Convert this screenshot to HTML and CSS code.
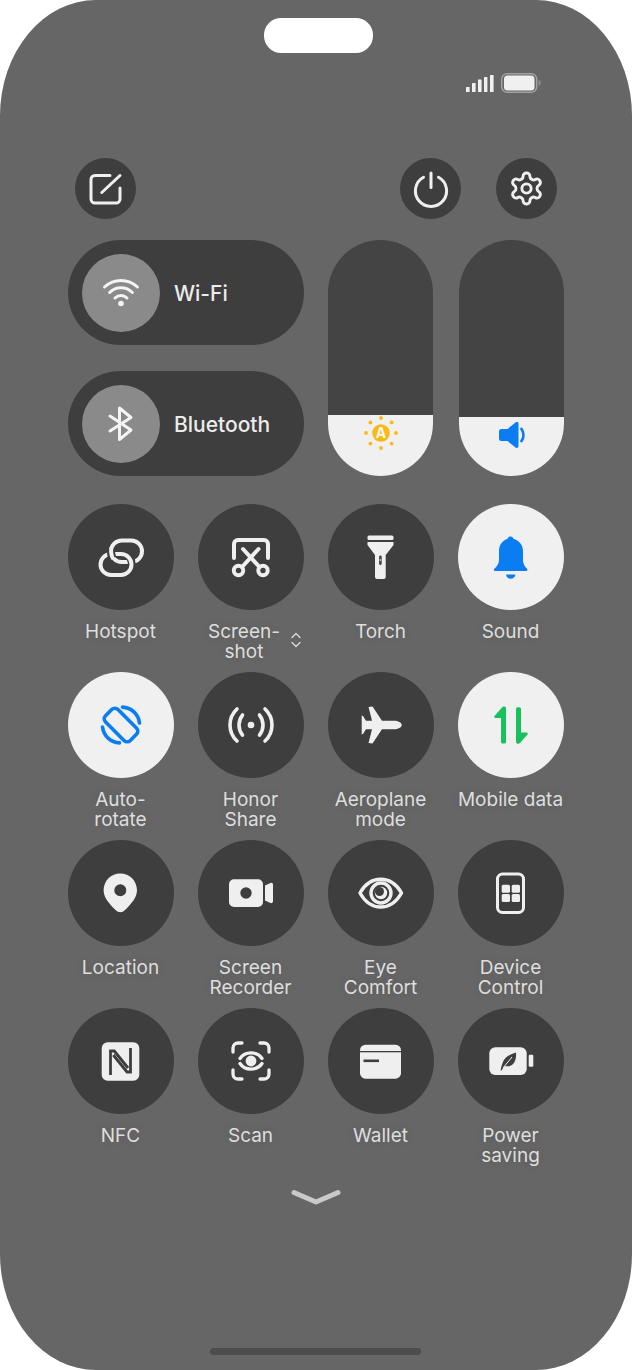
FILE: index.html
```html
<!DOCTYPE html>
<html lang="en">
<head>
    <meta charset="UTF-8">
    <meta name="viewport" content="width=device-width, initial-scale=1.0">
    <title>Control centre</title>
    <link rel="stylesheet" href="styles.css">
</head>
<body>
    <div class="phone">
        <div class="notch"></div>

        <div class="status">
            <svg class="signal" width="28" height="17" viewBox="0 0 28 17">
                <rect x="0" y="12" width="3.6" height="5" rx="0.6"/>
                <rect x="6" y="8" width="3.6" height="9" rx="0.6"/>
                <rect x="12" y="4.5" width="3.6" height="12.5" rx="0.6"/>
                <rect x="18" y="2" width="3.4" height="15" rx="0.6"/>
                <rect x="24" y="0" width="3.6" height="17" rx="0.6"/>
            </svg>
            <svg class="battery" width="40" height="20" viewBox="0 0 40 20">
                <rect x="0.7" y="0.7" width="35" height="18.6" rx="5.5" fill="none" stroke="#a2a2a2" stroke-width="1.4"/>
                <rect x="3" y="2.5" width="30.5" height="15" rx="3.5" fill="#f0f0f0"/>
                <path d="M37.6 7c1.4.4 2 1.5 2 3s-.6 2.6-2 3z" fill="#8f8f8f"/>
            </svg>
        </div>

        <div class="actions">
            <div class="action">
                <svg width="40" height="40" viewBox="0 0 40 40" fill="none" stroke="#efefef" stroke-width="3" stroke-linecap="round">
                    <path d="M25 6.5H10a4 4 0 0 0-4 4V30a4 4 0 0 0 4 4h21a4 4 0 0 0 4-4V19"/>
                    <path d="M35 6.5 16.8 23.5"/>
                </svg>
            </div>
            <div class="action action-power">
                <svg width="40" height="40" viewBox="0 0 40 40" fill="none" stroke="#efefef" stroke-width="3" stroke-linecap="round">
                    <path d="M12.5 8.2a15.6 15.6 0 1 0 15 0"/>
                    <path d="M20 4v14.5"/>
                </svg>
            </div>
            <div class="action">
                <svg width="37" height="37" viewBox="0 0 24 24" fill="none" stroke="#efefef" stroke-width="1.9">
                    <path d="M12.22 2h-.44a2 2 0 0 0-2 2v.18a2 2 0 0 1-1 1.73l-.43.25a2 2 0 0 1-2 0l-.15-.08a2 2 0 0 0-2.73.73l-.22.38a2 2 0 0 0 .73 2.73l.15.1a2 2 0 0 1 1 1.72v.51a2 2 0 0 1-1 1.74l-.15.09a2 2 0 0 0-.73 2.73l.22.38a2 2 0 0 0 2.73.73l.15-.08a2 2 0 0 1 2 0l.43.25a2 2 0 0 1 1 1.73V20a2 2 0 0 0 2 2h.44a2 2 0 0 0 2-2v-.18a2 2 0 0 1 1-1.73l.43-.25a2 2 0 0 1 2 0l.15.08a2 2 0 0 0 2.73-.73l.22-.39a2 2 0 0 0-.73-2.73l-.15-.08a2 2 0 0 1-1-1.74v-.5a2 2 0 0 1 1-1.74l.15-.09a2 2 0 0 0 .73-2.73l-.22-.38a2 2 0 0 0-2.73-.73l-.15.08a2 2 0 0 1-2 0l-.43-.25a2 2 0 0 1-1-1.73V4a2 2 0 0 0-2-2z"/>
                    <circle cx="12" cy="12" r="3"/>
                </svg>
            </div>
        </div>

        <div class="controls">
            <div class="pills">
                <div class="pill">
                    <div class="pill-icon">
                        <svg width="48" height="48" viewBox="0 0 48 48" fill="none" stroke="#f4f4f4" stroke-width="3" stroke-linecap="round">
                            <path d="M7.5 18a24 24 0 0 1 33 0"/>
                            <path d="M12.6 23.5a16.2 16.2 0 0 1 22.8 0"/>
                            <path d="M18 29a8.6 8.6 0 0 1 12 0"/>
                            <circle cx="24" cy="34.5" r="2.8" fill="#f4f4f4" stroke="none"/>
                        </svg>
                    </div>
                    <span class="pill-name">Wi-Fi</span>
                </div>
                <div class="pill">
                    <div class="pill-icon">
                        <svg width="48" height="48" viewBox="0 0 48 48" fill="none" stroke="#f4f4f4" stroke-width="3" stroke-linecap="round" stroke-linejoin="round">
                            <path d="M13 16 34 30 22.5 39.5V8L34 17.5 13 31"/>
                        </svg>
                    </div>
                    <span class="pill-name">Bluetooth</span>
                </div>
            </div>

            <div class="slider slider-brightness">
                <div class="slider-fill fill-brightness">
                    <svg width="36" height="36" viewBox="0 0 36 36" fill="#fdb913">
                        <circle cx="18" cy="18" r="8.8"/>
                        <circle cx="18" cy="3" r="1.9"/>
                        <circle cx="18" cy="33" r="1.9"/>
                        <circle cx="3" cy="18" r="1.9"/>
                        <circle cx="33" cy="18" r="1.9"/>
                        <circle cx="7.4" cy="7.4" r="1.9"/>
                        <circle cx="28.6" cy="7.4" r="1.9"/>
                        <circle cx="7.4" cy="28.6" r="1.9"/>
                        <circle cx="28.6" cy="28.6" r="1.9"/>
                        <text class="sun-letter" x="18" y="22.5" text-anchor="middle">A</text>
                    </svg>
                </div>
            </div>
            <div class="slider">
                <div class="slider-fill fill-volume">
                    <svg width="36" height="36" viewBox="0 0 36 36" fill="#0a7df2">
                        <path d="M6.5 12h6L20.5 5.5c1.5-1 3-.5 3 1.5v22c0 2-1.5 2.500-3 1.500L12.500 24h-6a2.500 2.500 0 0 1-2.500-2.500v-7a2.500 2.500 0 0 1 2.500-2.500z" transform="translate(1 0)"/>
                        <path d="M27.500 12c2.500 3.500 2.500 8.500 0 12" fill="none" stroke="#0a7df2" stroke-width="2.800" stroke-linecap="round"/>
                    </svg>
                </div>
            </div>
        </div>

        <div class="tiles">
            <div class="tile">
                <div class="tile-icon">
                    <svg width="48" height="48" viewBox="0 0 48 48" fill="none" stroke="#efefef" stroke-width="4">
                        <rect x="14" y="7.500" width="31" height="21.500" rx="10.700"/>
                        <path d="M33.200 25C35 28 35 33 33.500 36" stroke="#3e3e3e" stroke-width="8"/>
                        <rect x="3.500" y="21" width="31" height="21" rx="10.500"/>
                        <path d="M14.300 15.500C13.700 19 14 22.500 15.800 25.500" stroke="#3e3e3e" stroke-width="8"/>
                        <path d="M14.300 14.500C13.700 19 14 22.500 16.300 26"/>
                    </svg>
                </div>
                <div class="tile-name">Hotspot</div>
            </div>
            <div class="tile">
                <div class="tile-icon">
                    <svg width="48" height="48" viewBox="0 0 48 48" fill="none" stroke="#efefef" stroke-width="4" stroke-linecap="round">
                        <path d="M7 25V11a4 4 0 0 1 4-4h26a4 4 0 0 1 4 4v14"/>
                        <circle cx="11.500" cy="37.500" r="4.700"/>
                        <circle cx="36" cy="37.500" r="4.700"/>
                        <path d="M15 34 31.500 16"/>
                        <path d="M32.500 34 16 16"/>
                    </svg>
                </div>
                <div class="tile-name tile-name-more">Screen-<br>shot</div>
                <svg class="more" width="12" height="16" viewBox="0 0 12 16" fill="none" stroke="#dcdcdc" stroke-width="1.300" stroke-linecap="round" stroke-linejoin="round">
                    <path d="M2 5.500 6 1.500l4 4"/>
                    <path d="M2 10.500l4 4 4-4"/>
                </svg>
            </div>
            <div class="tile">
                <div class="tile-icon">
                    <svg width="48" height="48" viewBox="0 0 48 48" fill="#efefef">
                        <rect x="10.500" y="2.500" width="26" height="4.500" rx="1.500"/>
                        <path d="M10.500 9h26v3L28.700 22v22a2 2 0 0 1-2 2H20a2 2 0 0 1-2-2V22l-7.500-10z"/>
                        <rect x="22.100" y="22.500" width="2.600" height="9.500" rx="1.300" fill="#444"/>
                        <circle cx="23.400" cy="27" r="0.900" fill="#bbb"/>
                    </svg>
                </div>
                <div class="tile-name">Torch</div>
            </div>
            <div class="tile">
                <div class="tile-icon tile-icon-on">
                    <svg width="48" height="48" viewBox="0 0 48 48" fill="#0a7df2">
                        <path d="M23.500 3.500c1.500 0 2.500.8 2.800 2.200C32 7 36 12 36 18v9c0 3.500 1.500 6.500 4 8.800.8.800.3 2.200-.8 2.200H8.100c-1.100 0-1.600-1.400-.8-2.200C10 33.500 12 30.500 12 27v-9c0-6 3.500-11 8.700-12.300.3-1.400 1.300-2.200 2.800-2.200z"/>
                        <path d="M19 41.500h9.500c-.5 2.700-2.300 4.200-4.800 4.200S19.500 44.200 19 41.500z"/>
                    </svg>
                </div>
                <div class="tile-name">Sound</div>
            </div>

            <div class="tile">
                <div class="tile-icon tile-icon-on">
                    <svg width="48" height="48" viewBox="0 0 48 48" fill="none" stroke="#0a7df2" stroke-width="3.600" stroke-linecap="round">
                        <rect x="6.500" y="15.200" width="35" height="17.600" rx="4.500" transform="rotate(45 24 24)"/>
                        <path d="M25.500 6.100a18 18 0 0 1 17 15.900"/>
                        <path d="M22.500 41.900a18 18 0 0 1-17-15.900"/>
                    </svg>
                </div>
                <div class="tile-name">Auto-<br>rotate</div>
            </div>
            <div class="tile">
                <div class="tile-icon">
                    <svg width="48" height="48" viewBox="0 0 48 48" fill="none" stroke="#efefef" stroke-width="3.600" stroke-linecap="round">
                        <circle cx="24" cy="24" r="3.300" fill="#efefef" stroke="none"/>
                        <path d="M15.500 14a16 16 0 0 0 0 20"/>
                        <path d="M32.500 14a16 16 0 0 1 0 20"/>
                        <path d="M10 8a21.800 21.800 0 0 0 0 32"/>
                        <path d="M38 8a21.800 21.800 0 0 1 0 32"/>
                    </svg>
                </div>
                <div class="tile-name">Honor<br>Share</div>
            </div>
            <div class="tile">
                <div class="tile-icon">
                    <svg width="48" height="48" viewBox="0 0 48 48" fill="#efefef">
                        <path d="M44.700 24c0-2.600-3.700-4.300-7.700-4.300H25L15.500 5.500 11.500 6 15 19.700H9L6 15l-1.300-.5v19L6 33l3-4.700h6L11.500 42l4 .5 9.500-14.200h12c4 0 7.700-1.700 7.700-4.300z"/>
                    </svg>
                </div>
                <div class="tile-name">Aeroplane<br>mode</div>
            </div>
            <div class="tile">
                <div class="tile-icon tile-icon-on">
                    <svg width="48" height="48" viewBox="0 0 48 48" fill="#17c25c">
                        <path d="M19 7.500V41a1.500 1.500 0 0 1-1.500 1.500h-2A1.500 1.500 0 0 1 14 41V17H8.500c-1.200 0-1.700-1.100-1-2l7.500-8.500c1.200-1.300 4-1.300 4 1z"/>
                        <path d="M29 41V7.800a1.500 1.500 0 0 1 1.500-1.500h2a1.500 1.500 0 0 1 1.500 1.500V31.500h5.500c1.200 0 1.700 1.100 1 2L33 42c-1.200 1.300-4 1-4-1z"/>
                    </svg>
                </div>
                <div class="tile-name">Mobile data</div>
            </div>

            <div class="tile">
                <div class="tile-icon">
                    <svg width="48" height="48" viewBox="0 0 48 48" fill="#efefef">
                        <path fill-rule="evenodd" d="M23.300 4.500c9.300 0 16.700 7.400 16.700 16.800 0 7-5.500 13.500-12 19.800-3 2.900-6.400 2.900-9.400 0C12 34.800 6.600 28.300 6.600 21.300 6.600 11.900 14 4.500 23.300 4.500zm0 10.800a6 6 0 1 0 0 12 6 6 0 0 0 0-12z"/>
                    </svg>
                </div>
                <div class="tile-name">Location</div>
            </div>
            <div class="tile">
                <div class="tile-icon">
                    <svg width="48" height="48" viewBox="0 0 48 48" fill="#efefef">
                        <path fill-rule="evenodd" d="M7 10.300h24a5 5 0 0 1 5 5V33a5 5 0 0 1-5 5H7a5 5 0 0 1-5-5V15.300a5 5 0 0 1 5-5zm12 8a5.700 5.700 0 1 0 0 11.400 5.700 5.700 0 0 0 0-11.400z"/>
                        <path d="M38 16.500l5.500-2.500c1.300-.5 2.500.3 2.500 1.700v16.600c0 1.400-1.200 2.200-2.500 1.700L38 31.500z"/>
                    </svg>
                </div>
                <div class="tile-name">Screen<br>Recorder</div>
            </div>
            <div class="tile">
                <div class="tile-icon">
                    <svg width="48" height="48" viewBox="0 0 48 48" fill="none" stroke="#efefef" stroke-width="3.400">
                        <path d="M3 24C8 15 15 10.300 23.700 10.300S39.500 15 44.500 24C39.500 33 32.500 38 23.700 38S8 33 3 24z" stroke-linejoin="round"/>
                        <circle cx="24" cy="24" r="10"/>
                        <circle cx="24" cy="24" r="6.200" fill="#efefef" stroke="none"/>
                        <circle cx="22.500" cy="22.500" r="4.500" fill="#3e3e3e" stroke="none"/>
                    </svg>
                </div>
                <div class="tile-name">Eye<br>Comfort</div>
            </div>
            <div class="tile">
                <div class="tile-icon">
                    <svg width="48" height="48" viewBox="0 0 48 48" fill="#efefef">
                        <rect x="10.500" y="5" width="26" height="38.500" rx="5" fill="none" stroke="#efefef" stroke-width="3"/>
                        <rect x="14.700" y="15.700" width="8.300" height="8" rx="1.500"/>
                        <rect x="24.700" y="15.700" width="8.300" height="8" rx="1.500"/>
                        <rect x="14.700" y="25" width="8.300" height="8" rx="1.500"/>
                        <rect x="24.700" y="25" width="8.300" height="8" rx="1.500"/>
                    </svg>
                </div>
                <div class="tile-name">Device<br>Control</div>
            </div>

            <div class="tile">
                <div class="tile-icon">
                    <svg width="48" height="48" viewBox="0 0 48 48">
                        <rect x="4.700" y="5.300" width="37.600" height="38.400" rx="6" fill="#efefef"/>
                        <path d="M13.500 38V14h3.800L31 31" fill="none" stroke="#3e3e3e" stroke-width="2.800"/>
                        <path d="M33.500 11v24H30L16.300 18" fill="none" stroke="#3e3e3e" stroke-width="2.800"/>
                    </svg>
                </div>
                <div class="tile-name">NFC</div>
            </div>
            <div class="tile">
                <div class="tile-icon">
                    <svg width="48" height="48" viewBox="0 0 48 48" fill="none" stroke="#efefef" stroke-width="3.300" stroke-linecap="round">
                        <path d="M6 15v-4a5 5 0 0 1 5-5h4"/>
                        <path d="M33 6h4a5 5 0 0 1 5 5v4"/>
                        <path d="M42 33v4a5 5 0 0 1-5 5h-4"/>
                        <path d="M15 42h-4a5 5 0 0 1-5-5v-4"/>
                        <path d="M13 21.500c5-7.500 17-7.500 22 0"/>
                        <path d="M13 26.500c5 7.500 17 7.500 22 0"/>
                        <circle cx="24" cy="24" r="5.400" fill="#efefef" stroke="none"/>
                    </svg>
                </div>
                <div class="tile-name">Scan</div>
            </div>
            <div class="tile">
                <div class="tile-icon">
                    <svg width="48" height="48" viewBox="0 0 48 48">
                        <rect x="3" y="7.700" width="41" height="34" rx="5.500" fill="#efefef"/>
                        <rect x="3" y="14" width="41" height="1.300" fill="#3e3e3e"/>
                        <rect x="6.500" y="22.500" width="15.500" height="2.600" fill="#3e3e3e"/>
                    </svg>
                </div>
                <div class="tile-name">Wallet</div>
            </div>
            <div class="tile">
                <div class="tile-icon">
                    <svg width="48" height="48" viewBox="0 0 48 48" fill="#efefef">
                        <rect x="2.300" y="10.300" width="37.400" height="27.700" rx="6"/>
                        <rect x="41.700" y="17.700" width="4.600" height="12" rx="1.200"/>
                        <path d="M13.500 33.500C14.500 29 15.500 24 18.500 21 21 18.500 25 16.500 29 15.500 29.500 20 28.500 25 25.500 27.500 23 29.500 20 29.700 17.500 29l-3 4.500z" fill="#3e3e3e"/>
                        <path d="M16 31 25 20" fill="none" stroke="#efefef" stroke-width="1"/>
                    </svg>
                </div>
                <div class="tile-name">Power<br>saving</div>
            </div>
        </div>

        <svg class="collapse" width="50" height="16" viewBox="0 0 50 16" fill="none" stroke="#c9c9c9" stroke-width="5" stroke-linecap="round" stroke-linejoin="round">
            <path d="M3 3.500 25 13 47 3.500"/>
        </svg>

        <div class="home-bar"></div>
    </div>
</body>
</html>
```

FILE: styles.css
```css
body {
    margin: 0;
    background-color: #fff;
    font-family: Inter, "Noto Sans", sans-serif;
}
.phone {
    box-sizing: border-box;
    width: 632px;
    height: 1370px;
    padding: 18px 68px 0;
    overflow: hidden;
    background-color: #666;
    border-radius: 96px / 116px;
    display: flex;
    flex-direction: column;
}
.notch {
    align-self: center;
    width: 109px;
    height: 35px;
    margin-left: 5px;
    background-color: #fff;
    border-radius: 17px;
}

/* status icons */
.status {
    margin-top: 20px;
    margin-right: 23px;
    height: 20px;
    display: flex;
    justify-content: flex-end;
    align-items: flex-start;
    gap: 7px;
}
.signal {
    margin-top: 2px;
    fill: #f0f0f0;
}

/* edit, power, settings */
.actions {
    margin-top: 65px;
    padding: 0 7px 0 6.5px;
    display: flex;
    gap: 35px;
}
.action {
    width: 61px;
    height: 61px;
    background-color: #3e3e3e;
    border-radius: 50%;
    display: flex;
    align-items: center;
    justify-content: center;
}
.action-power {
    margin-left: auto;
}

/* wifi, bluetooth, sliders */
.controls {
    margin-top: 21px;
    height: 236px;
    display: flex;
}
.pills {
    width: 236px;
    margin-right: 24px;
    display: flex;
    flex-direction: column;
    justify-content: space-between;
}
.pill {
    height: 105px;
    padding-left: 14px;
    background-color: #3e3e3e;
    border-radius: 53px;
    display: flex;
    align-items: center;
    gap: 14px;
}
.pill-icon {
    width: 78px;
    height: 78px;
    background-color: #8a8a8a;
    border-radius: 50%;
    display: flex;
    align-items: center;
    justify-content: center;
}
.pill-name {
    padding-top: 2px;
    font-size: 21px;
    font-weight: 500;
    color: #ececec;
}
.slider {
    width: 105px;
    overflow: hidden;
    background-color: #444;
    border-radius: 53px;
    display: flex;
    flex-direction: column;
    justify-content: flex-end;
}
.slider-brightness {
    margin-right: 26px;
}
.slider-fill {
    background-color: #f0f0f0;
    display: flex;
    justify-content: center;
}
.fill-brightness {
    height: 61px;
    align-items: flex-start;
}
.fill-volume {
    height: 59px;
    align-items: flex-start;
}
.sun-letter {
    font-size: 14px;
    font-weight: 700;
    fill: #f7f7f7;
}

/* round tiles */
.tiles {
    margin-top: 28px;
    display: grid;
    grid-template-columns: repeat(4, 106px);
    column-gap: 24px;
    row-gap: 10px;
}
.tile {
    position: relative;
}
.tile-icon {
    width: 106px;
    height: 106px;
    background-color: #3e3e3e;
    border-radius: 50%;
    display: flex;
    align-items: center;
    justify-content: center;
}
.tile-icon-on {
    background-color: #f0f0f0;
}
.tile-name {
    height: 40px;
    margin: 12px -10px 0 -11px;
    font-size: 19px;
    line-height: 20px;
    text-align: center;
    white-space: nowrap;
    color: #dedede;
    text-shadow: 0 0 10px rgba(0, 0, 0, 0.12);
}
.tile-name-more {
    margin-left: -24px;
}
.more {
    position: absolute;
    left: 92px;
    top: 128px;
}

.collapse {
    align-self: center;
    margin-top: 23px;
}
.home-bar {
    align-self: center;
    width: 211px;
    height: 7px;
    margin-top: 143px;
    margin-right: 2px;
    background-color: #4d4d4d;
    border-radius: 4px;
}
```
